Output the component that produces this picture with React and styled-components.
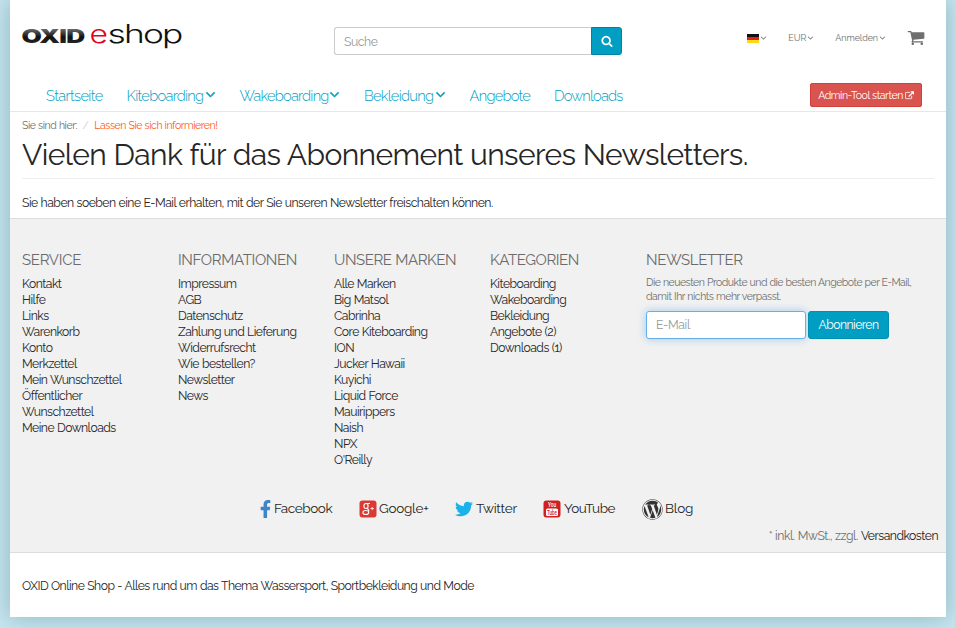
import React from 'react';
import styled, { createGlobalStyle } from 'styled-components';
import { FaFacebookF, FaTwitter, FaWordpress } from 'react-icons/fa';

const GlobalStyle = createGlobalStyle`
  * { box-sizing: border-box; }
  body {
    margin: 0;
    background: #c5e5ef;
    font: 12.2px/16px Raleway, Lato, "Open Sans", sans-serif;
    color: #262626;
    font-kerning: normal;
  }
  a { color: inherit; text-decoration: none; }
  ul { list-style: none; margin: 0; padding: 0; }
  h1, h2, p { margin: 0; }
`;

const Txt = styled.span`
  letter-spacing: ${(p) => p.$ls || 0}px;
  word-spacing: 0.3px;
  white-space: nowrap;
`;

const Page = styled.div`
  width: 936px;
  height: 617px;
  margin: 0 0 11px 10px;
  background: #fff;
  box-shadow: 0 0 22px rgba(0, 50, 65, 0.27);
  display: flex;
  flex-direction: column;
`;

const Header = styled.header`
  height: 80px;
  padding: 0 12px;
  display: grid;
  grid-template-columns: 312px 288px 1fr;
`;

const LogoLink = styled.a`
  display: block;
  padding-top: 20px;
`;

const Search = styled.form`
  display: flex;
  height: 28px;
  margin-top: 27px;
`;

const SearchInput = styled.input`
  flex: 1;
  min-width: 0;
  border: 1px solid #ccc;
  border-right: 0;
  border-radius: 3px 0 0 3px;
  padding: 1px 9px 0;
  font: inherit;
  letter-spacing: -0.45px;
  outline: 0;
  &::placeholder { color: #999; opacity: 1; }
`;

const SearchButton = styled.button`
  width: 31px;
  border: 1px solid #0083a3;
  border-radius: 0 3px 3px 0;
  background: #009ec2;
  color: #fff;
  padding: 0;
  display: flex;
  align-items: center;
  justify-content: center;
`;

const Services = styled.div`
  display: flex;
  align-items: center;
  justify-content: flex-end;
  height: 76px;
  padding-right: 9px;
  font-size: 9px;
  color: #6f6f6f;
`;

const Service = styled.a`
  display: flex;
  align-items: center;
  gap: 1px;
  margin-right: ${(p) => p.$gap}px;
`;

const Glyph = styled.svg`
  display: block;
  flex: none;
  fill: currentColor;
`;

const Nav = styled.nav`
  height: 32px;
  padding: 0 24px 0 36px;
  border-bottom: 1px solid #e7e7e7;
  display: flex;
  align-items: center;
`;

const NavLink = styled.a`
  display: flex;
  align-items: center;
  justify-content: space-between;
  width: ${(p) => p.$w}px;
  margin-right: 24px;
  font-size: 14.7px;
  font-weight: 300;
  line-height: 20px;
  color: #009ec2;
`;

const AdminButton = styled.a`
  display: flex;
  align-items: center;
  justify-content: center;
  gap: 2px;
  width: 112px;
  height: 24px;
  margin: -1px 0 0 auto;
  border: 1px solid #d43f3a;
  border-radius: 2px;
  background: #d9534f;
  color: #fff;
  font-size: 10.5px;
`;

const Content = styled.main`
  height: 106px;
  padding: 5px 12px 0;
`;

const Breadcrumb = styled.div`
  display: flex;
  gap: 5.5px;
  font-size: 10.5px;
  color: #6f6f6f;
`;

const Slash = styled.span`
  color: #ccc;
`;

const Current = styled.a`
  color: #ff5a14;
`;

const Title = styled.h1`
  height: 46px;
  padding-top: 5px;
  border-bottom: 1px solid #eee;
  font-size: 30px;
  line-height: 33px;
  font-weight: 400;
`;

const Message = styled.p`
  margin-top: 16px;
`;

const Footer = styled.footer`
  height: 335px;
  background: #f1f1f1;
  border-top: 1px solid #ddd;
  border-bottom: 1px solid #ddd;
  display: flex;
  flex-direction: column;
`;

const Columns = styled.div`
  display: grid;
  grid-template-columns: repeat(4, 156px) 1fr;
  padding: 32px 12px 0;
  height: 275px;
`;

const Heading = styled.h2`
  font-size: 15px;
  line-height: 18px;
  font-weight: 400;
  color: #6b6b6b;
  margin-bottom: 7px;
`;

const Hint = styled.p`
  font-size: 10.5px;
  line-height: 13.5px;
  color: #6f6f6f;
  margin: 0 0 8px;
`;

const Subscribe = styled.form`
  display: flex;
  gap: 2px;
`;

const EmailInput = styled.input`
  width: 160px;
  height: 28px;
  border: 1px solid #66afe9;
  border-radius: 3px;
  box-shadow: 0 0 8px rgba(102, 175, 233, 0.6);
  padding: 0 9px 1px;
  font: inherit;
  letter-spacing: -0.3px;
  outline: 0;
  &::placeholder { color: #999; opacity: 1; }
`;

const SubscribeButton = styled.button`
  width: 81px;
  height: 28px;
  padding: 0;
  border: 1px solid #0090b2;
  border-radius: 3px;
  background: #009ec2;
  color: #fff;
  font: inherit;
`;

const Socials = styled.div`
  display: flex;
  align-items: center;
  height: 28px;
  padding-left: 249px;
  font-size: 13.5px;
`;

const Social = styled.a`
  display: flex;
  align-items: center;
  gap: 2px;
  width: ${(p) => p.$w}px;
`;

const SocialIcon = styled.span`
  display: flex;
  width: ${(p) => p.$w}px;
  justify-content: center;
  color: ${(p) => p.$color};
  padding-top: 2px;
`;

const VatNote = styled.div`
  display: flex;
  justify-content: flex-end;
  gap: 3px;
  padding: 6px 8px 0;
  color: #6f6f6f;
`;

const Dark = styled.a`
  color: #222;
`;

const Legal = styled.div`
  padding: 25px 12px 0;
`;

const Logo = () => (
  <Glyph width="164" height="32" viewBox="0 0 164 32" role="img" aria-label="OXID eshop">
    <defs>
      <linearGradient id="ink" x1="0" y1="0" x2="0" y2="1">
        <stop offset="0.2" stopColor="#666" />
        <stop offset="0.55" stopColor="#111" />
        <stop offset="1" stopColor="#333" />
      </linearGradient>
    </defs>
    <g fontFamily="Inter, sans-serif">
      <text x="-0.500" y="23" fontSize="18.500" fontWeight="900" fill="url(#ink)" letterSpacing="-0.500" textLength="63" lengthAdjust="spacingAndGlyphs">OXID</text>
      <text x="67.500" y="23" fontSize="25" fontWeight="300" fill="#e2001a" textLength="18.500" lengthAdjust="spacingAndGlyphs">e</text>
      <text x="85.500" y="23" fontSize="25" fontWeight="300" letterSpacing="-1.300" fill="#111" textLength="74" lengthAdjust="spacingAndGlyphs">shop</text>
    </g>
  </Glyph>
);

const Angle = ({ size, bold = 0 }) => (
  <Glyph width={size} height={size} viewBox="256 400 1280 1280" stroke="currentColor" strokeWidth={bold} aria-hidden="true">
    <path d="M1395 736q0 13-10 23l-466 466q-10 10-23 10t-23-10l-466-466q-10-10-10-23t10-23l50-50q10-10 23-10t23 10l393 393 393-393q10-10 23-10t23 10l50 50q10 10 10 23z" />
  </Glyph>
);

const SearchGlyph = () => (
  <Glyph width="12" height="12" viewBox="0 0 1792 1792" aria-hidden="true">
    <path d="M1216 832q0-185-131.5-316.5t-316.5-131.5-316.5 131.5-131.5 316.5 131.5 316.5 316.5 131.5 316.5-131.5 131.5-316.5zm512 832q0 52-38 90t-90 38q-54 0-90-38l-343-342q-179 124-399 124-143 0-273.5-55.5t-225-150-150-225-55.5-273.5 55.5-273.5 150-225 225-150 273.5-55.5 273.5 55.5 225 150 150 225 55.5 273.5q0 220-124 399l343 343q37 37 37 90z" />
  </Glyph>
);

const Cart = () => (
  <Glyph width="18" height="18" viewBox="0 64 1792 1792" aria-hidden="true">
    <path d="M704 1536q0 52-38 90t-90 38-90-38-38-90 38-90 90-38 90 38 38 90zm896 0q0 52-38 90t-90 38-90-38-38-90 38-90 90-38 90 38 38 90zm128-1088v512q0 24-16.500 42.500t-40.500 21.500l-1044 122q13 60 13 70 0 16-24 64h920q26 0 45 19t19 45-19 45-45 19h-1024q-26 0-45-19t-19-45q0-11 8-31.500t16-36 21.500-40 15.500-29.500l-177-823h-204q-26 0-45-19t-19-45 19-45 45-19h256q16 0 28.500 6.500t19.500 15.500 13 24.500 8 26 5.500 29.500 4.500 26h1201q26 0 45 19t19 45z" />
  </Glyph>
);

const External = () => (
  <Glyph width="9" height="9" viewBox="64 0 1792 1792" stroke="currentColor" strokeWidth="50" aria-hidden="true">
    <path d="M1472 992v320q0 119-84.500 203.500t-203.500 84.500h-832q-119 0-203.500-84.500t-84.500-203.500v-832q0-119 84.500-203.500t203.500-84.500h704q14 0 23 9t9 23v64q0 14-9 23t-23 9h-704q-66 0-113 47t-47 113v832q0 66 47 113t113 47h832q66 0 113-47t47-113v-320q0-14 9-23t23-9h64q14 0 23 9t9 23zm384-864v512q0 26-19 45t-45 19-45-19l-176-176-652 652q-10 10-23 10t-23-10l-114-114q-10-10-10-23t10-23l652-652-176-176q-19-19-19-45t19-45 45-19h512q26 0 45 19t19 45z" />
  </Glyph>
);

const Flag = () => (
  <Glyph width="12" height="9" viewBox="0 0 12 9" aria-hidden="true">
    <rect width="12" height="3" fill="#111" />
    <rect y="3" width="12" height="3" fill="#e0241b" />
    <rect y="6" width="12" height="3" fill="#ffd91a" />
  </Glyph>
);

const GooglePlus = () => (
  <Glyph width="18" height="18" viewBox="0 0 18 18" aria-hidden="true">
    <rect x="0.500" y="0.500" width="17" height="17" rx="3" fill="#db3a33" />
    <g fill="none" stroke="#fff" strokeWidth="1.100">
      <ellipse cx="7" cy="6" rx="2.100" ry="2.500" />
      <path d="M7 3.500h4M8 8.300c2 1.400 2.300 2 1.500 3.200" />
      <ellipse cx="6.800" cy="12.500" rx="2.900" ry="2" />
      <path d="M11.500 8.500h3.400M13.200 6.800v3.400" strokeWidth="0.800" />
    </g>
  </Glyph>
);

const YouTube = () => (
  <Glyph width="18" height="18" viewBox="0 0 18 18" aria-hidden="true">
    <rect x="0.500" y="0.500" width="17" height="17" rx="3" fill="#cd201f" />
    <rect x="3" y="8.500" width="12" height="7.500" rx="1.500" fill="#fff" />
    <g fontFamily="Roboto, sans-serif" fontWeight="500">
      <text x="5" y="7.300" fontSize="6.500" fill="#fff" textLength="8" lengthAdjust="spacingAndGlyphs">You</text>
      <text x="4" y="14.800" fontSize="6.500" fill="#cd201f" textLength="10" lengthAdjust="spacingAndGlyphs">Tube</text>
    </g>
  </Glyph>
);

const nav = [
  ['Startseite', 56.5, -0.62],
  ['Kiteboarding', 89, -0.7, true],
  ['Wakeboarding', 100.5, -0.75, true],
  ['Bekleidung', 81.5, -0.73, true],
  ['Angebote', 60.5, -0.74],
  ['Downloads', 69, -0.8],
];

const columns = [
  ['Service', -0.3, ['Kontakt', 'Hilfe', 'Links', 'Warenkorb', 'Konto', 'Merkzettel', 'Mein Wunschzettel', 'Öffentlicher', 'Wunschzettel', 'Meine Downloads']],
  ['Informationen', -0.36, ['Impressum', 'AGB', 'Datenschutz', 'Zahlung und Lieferung', 'Widerrufsrecht', 'Wie bestellen?', 'Newsletter', 'News']],
  ['Unsere Marken', -0.43, ['Alle Marken', 'Big Matsol', 'Cabrinha', 'Core Kiteboarding', 'ION', 'Jucker Hawaii', 'Kuyichi', 'Liquid Force', 'Mauirippers', 'Naish', 'NPX', "O'Reilly"]],
  ['Kategorien', -0.41, ['Kiteboarding', 'Wakeboarding', 'Bekleidung', 'Angebote (2)', 'Downloads (1)']],
];

const socials = [
  ['Facebook', 99, -0.38, 13, '#3d85c6', <FaFacebookF size={18} />],
  ['Google+', 96, -0.25, 19, '#db3a33', <GooglePlus />],
  ['Twitter', 88, -0.24, 20, '#1bb2e9', <FaTwitter size={18} />],
  ['YouTube', 99, -0.37, 20, '#cd201f', <YouTube />],
  ['Blog', 60, -0.2, 22, '#333', <FaWordpress size={21} />],
];

export default function App() {
  return (
    <>
      <GlobalStyle />
      <Page>
        <Header>
          <LogoLink href="#"><Logo /></LogoLink>
          <Search>
            <SearchInput placeholder="Suche" />
            <SearchButton type="button" aria-label="Suche"><SearchGlyph /></SearchButton>
          </Search>
          <Services>
            <Service href="#" $gap={21}><Flag /><Angle size={7} /></Service>
            <Service href="#" $gap={21}><Txt $ls={-0.05}>EUR</Txt><Angle size={7} /></Service>
            <Service href="#" $gap={21}><Txt $ls={-0.1}>Anmelden</Txt><Angle size={7} /></Service>
            <Service href="#" $gap={0}><Cart /></Service>
          </Services>
        </Header>
        <Nav>
          {nav.map(([label, w, ls, drop]) => (
            <NavLink href="#" key={label} $w={w}>
              <Txt $ls={ls}>{label}</Txt>
              {drop && <Angle size={11} bold={70} />}
            </NavLink>
          ))}
          <AdminButton href="#"><Txt $ls={-0.42}>Admin-Tool starten</Txt><External /></AdminButton>
        </Nav>
        <Content>
          <Breadcrumb>
            <Txt $ls={-0.43}>Sie sind hier:</Txt>
            <Slash>/</Slash>
            <Current href="#"><Txt $ls={-0.44}>Lassen Sie sich informieren!</Txt></Current>
          </Breadcrumb>
          <Title><Txt $ls={-0.6}>Vielen Dank für das Abonnement unseres Newsletters.</Txt></Title>
          <Message>
            <Txt $ls={-0.5}>Sie haben soeben eine E-Mail erhalten, mit der Sie unseren Newsletter freischalten können.</Txt>
          </Message>
        </Content>
        <Footer>
          <Columns>
            {columns.map(([title, ls, items]) => (
              <section key={title}>
                <Heading><Txt $ls={ls}>{title.toUpperCase()}</Txt></Heading>
                <ul>
                  {items.map((item) => (
                    <li key={item}><a href="#"><Txt $ls={-0.52}>{item}</Txt></a></li>
                  ))}
                </ul>
              </section>
            ))}
            <section>
              <Heading><Txt $ls={-0.36}>NEWSLETTER</Txt></Heading>
              <Hint>
                <Txt $ls={-0.5}>Die neuesten Produkte und die besten Angebote per E-Mail,</Txt><br />
                <Txt $ls={-0.45}>damit Ihr nichts mehr verpasst.</Txt>
              </Hint>
              <Subscribe>
                <EmailInput placeholder="E-Mail" />
                <SubscribeButton type="button"><Txt $ls={-0.54}>Abonnieren</Txt></SubscribeButton>
              </Subscribe>
            </section>
          </Columns>
          <Socials>
            {socials.map(([label, w, ls, iw, color, icon]) => (
              <Social href="#" key={label} $w={w}>
                <SocialIcon $w={iw} $color={color}>{icon}</SocialIcon>
                <Txt $ls={ls}>{label}</Txt>
              </Social>
            ))}
          </Socials>
          <VatNote>
            <Txt $ls={-0.44}>* inkl. MwSt., zzgl.</Txt>
            <Dark href="#"><Txt $ls={-0.5}>Versandkosten</Txt></Dark>
          </VatNote>
        </Footer>
        <Legal>
          <Txt $ls={-0.52}>OXID Online Shop - Alles rund um das Thema Wassersport, Sportbekleidung und Mode</Txt>
        </Legal>
      </Page>
    </>
  );
}
